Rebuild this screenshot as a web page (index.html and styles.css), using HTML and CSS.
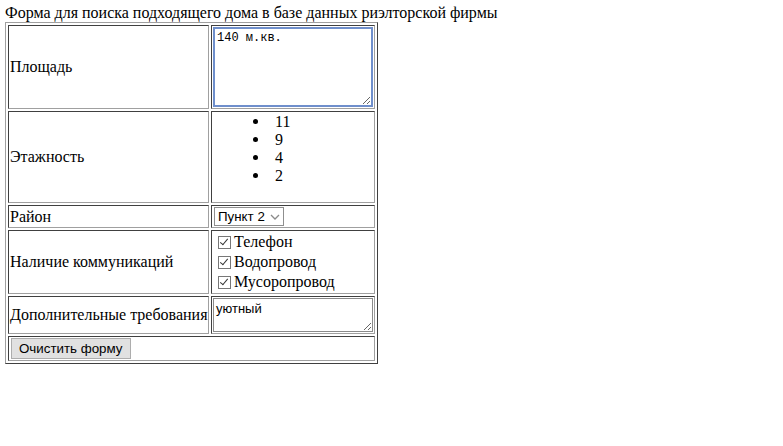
FILE: index.html
```html
<!DOCTYPE html>
<html lang="ru">
<head>
<meta charset="utf-8">
<title>Поиск дома</title>
<link rel="stylesheet" href="styles.css">
</head>
<body>
<form class="search-form">
<div class="form-title">Форма для поиска подходящего дома в базе данных риэлторской фирмы</div>
<table class="grid">
  <colgroup>
    <col class="col-label">
    <col class="col-field">
  </colgroup>
  <tr class="row-area">
    <td class="label">Площадь</td>
    <td class="field"><textarea class="area-input" spellcheck="false">140 м.кв.</textarea></td>
  </tr>
  <tr>
    <td class="label">Этажность</td>
    <td class="field">
      <ul class="floors">
        <li>11</li>
        <li>9</li>
        <li>4</li>
        <li>2</li>
      </ul>
    </td>
  </tr>
  <tr>
    <td class="label">Район</td>
    <td class="field">
      <span class="select-wrap">
        <select class="district">
          <option>Пункт 1</option>
          <option selected>Пункт 2</option>
          <option>Пункт 3</option>
        </select>
        <svg class="chevron" width="10" height="6" viewBox="0 0 10 6"><path d="M1 1 L5 5 L9 1" fill="none" stroke="#8a8a8a" stroke-width="1.3"/></svg>
      </span>
    </td>
  </tr>
  <tr>
    <td class="label">Наличие коммуникаций</td>
    <td class="field">
      <label class="check"><input type="checkbox" checked>Телефон</label>
      <label class="check"><input type="checkbox" checked>Водопровод</label>
      <label class="check"><input type="checkbox" checked>Мусоропровод</label>
    </td>
  </tr>
  <tr>
    <td class="label">Дополнительные требования</td>
    <td class="field"><textarea class="extra-input" spellcheck="false">уютный</textarea></td>
  </tr>
  <tr>
    <td class="field" colspan="2"><button type="reset" class="reset-btn">Очистить форму</button></td>
  </tr>
</table>
</form>
</body>
</html>
```

FILE: styles.css
```css
html, body {
  background: #ffffff;
}
body {
  margin: 4px 5px 0 5px;
  font-family: "Liberation Serif", "Times New Roman", serif;
  font-size: 16px;
  color: #000;
}
.search-form {
  margin: 0;
}
.form-title {
  line-height: 18px;
  white-space: nowrap;
}
.grid {
  table-layout: fixed;
  width: 373px;
  border: 1px solid;
  border-color: #a0a0a0 #404040 #404040 #a0a0a0;
  border-spacing: 2px;
  border-collapse: separate;
}
.col-label {
  width: 201px;
}
.col-field {
  width: 164px;
}
.grid td {
  border: 1px solid;
  border-color: #404040 #a0a0a0 #a0a0a0 #404040;
  padding: 1px;
  vertical-align: middle;
  overflow: visible;
}
.label {
  white-space: nowrap;
  text-align: left;
}
textarea {
  display: block;
  box-sizing: border-box;
  width: 160px;
  margin: 0;
  padding: 2px;
  background: #fff;
  color: #000;
}
.area-input {
  height: 80px;
  font-family: "Liberation Mono", "Courier New", monospace;
  font-size: 12px;
  border: 2px solid #6f8fcc;
  outline: none;
  padding: 2px 2px 1px 2px;
}
.extra-input {
  height: 34px;
  font-family: "Liberation Sans", Arial, sans-serif;
  font-size: 13px;
  border: 1px solid #8a8a8a;
  outline: none;
}
.floors {
  margin: 0 0 16px 0;
  padding-left: 62px;
  line-height: 18px;
  list-style: none;
}
.floors li::before {
  content: "";
  display: inline-block;
  width: 5px;
  height: 5px;
  border-radius: 50%;
  background: #000;
  margin-left: -22px;
  margin-right: 17px;
  vertical-align: 3px;
}
.select-wrap {
  position: relative;
  display: block;
  width: 70px;
  margin-left: 1px;
}
.district {
  display: block;
  appearance: none;
  -webkit-appearance: none;
  box-sizing: border-box;
  width: 70px;
  height: 19px;
  margin: 0;
  padding: 0 0 0 3px;
  border: 1px solid #8f8f8f;
  border-radius: 0;
  background: #fff;
  color: #000;
  font-family: "Liberation Sans", Arial, sans-serif;
  font-size: 13.33px;
}
.chevron {
  position: absolute;
  right: 4px;
  top: 7px;
  pointer-events: none;
}
.check {
  display: flex;
  align-items: center;
  height: 20px;
  white-space: nowrap;
}
.check input {
  appearance: none;
  -webkit-appearance: none;
  position: relative;
  box-sizing: border-box;
  width: 13px;
  height: 13px;
  margin: 0 3px 0 5px;
  border: 1px solid #777;
  background: #fff;
  flex: none;
}
.check input:checked::after {
  content: "";
  position: absolute;
  left: 3px;
  top: 0px;
  width: 3px;
  height: 7px;
  border-right: 1.3px solid #333;
  border-bottom: 1.3px solid #333;
  transform: rotate(40deg);
}
.reset-btn {
  display: block;
  box-sizing: border-box;
  width: 120px;
  height: 21px;
  margin: 0 0 0 1px;
  padding: 0 7px;
  background: #e1e1e1;
  border: 1px solid #adadad;
  border-radius: 0;
  font-family: "Liberation Sans", Arial, sans-serif;
  font-size: 13.33px;
  color: #000;
  text-align: left;
}
```
